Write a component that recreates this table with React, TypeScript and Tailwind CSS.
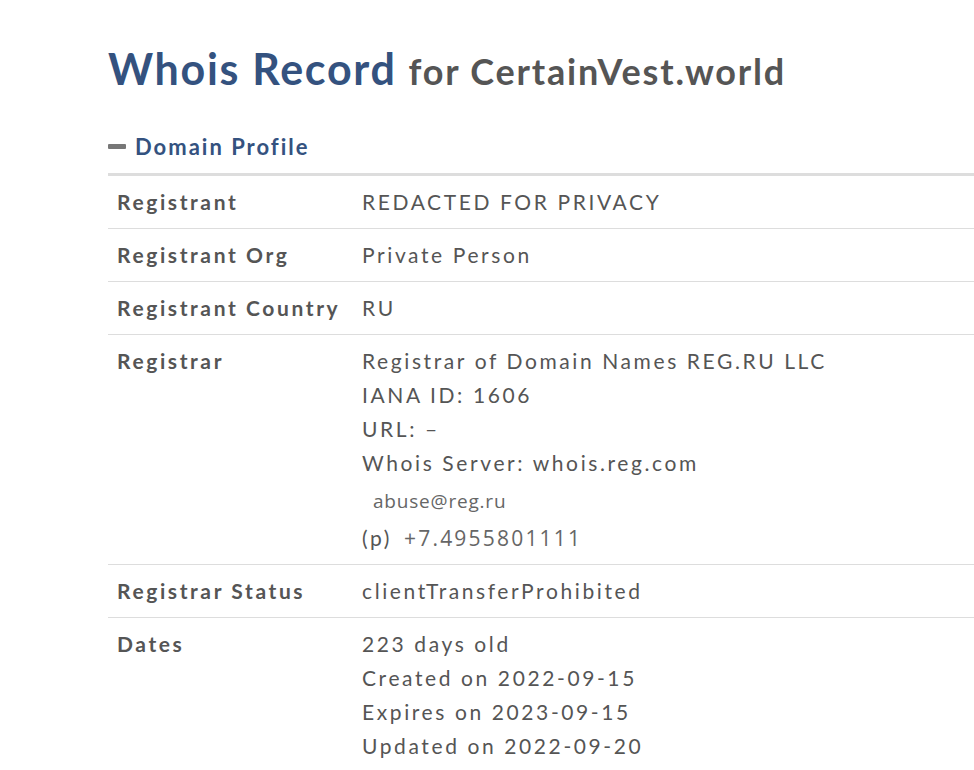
const rows: { label: string; lines: React.ReactNode[] }[] = [
  { label: 'Registrant', lines: ['REDACTED FOR PRIVACY'] },
  { label: 'Registrant Org', lines: ['Private Person'] },
  { label: 'Registrant Country', lines: ['RU'] },
  {
    label: 'Registrar',
    lines: [
      'Registrar of Domain Names REG.RU LLC',
      'IANA ID: 1606',
      'URL: –',
      'Whois Server: whois.reg.com',
      <span className="ml-[11px] block pt-[4px] font-['Open_Sans',sans-serif] text-[19px] tracking-[0.8px] text-[#666]">
        abuse@reg.ru
      </span>,
      <span className="block pt-[3px]">
        (p)
        <span className="ml-[12px] font-['Open_Sans',sans-serif] text-[21px] tracking-[2.2px] text-[#666]">
          +7.4955801111
        </span>
      </span>,
    ],
  },
  { label: 'Registrar Status', lines: ['clientTransferProhibited'] },
  {
    label: 'Dates',
    lines: [
      '223 days old',
      'Created on 2022-09-15',
      'Expires on 2023-09-15',
      'Updated on 2022-09-20',
    ],
  },
];

export default function App() {
  return (
    <div className="min-h-[770px] overflow-hidden bg-white pl-[108px] pt-[40px] font-['Lato',sans-serif] text-[#555]">
      {/* Title */}
      <h1 className="flex items-baseline whitespace-nowrap font-bold leading-[58px]">
        <span className="text-[43px] tracking-[1.7px] text-[#34527f]">Whois Record</span>
        <span className="ml-[12px] text-[36px] tracking-[1.8px] text-[#555]">for CertainVest.world</span>
      </h1>

      {/* Section header */}
      <div className="mt-[30px] flex items-center">
        <span className="mr-[9px] block h-[5px] w-[18px] rounded-[1px] bg-[#777]" />
        <span className="text-[22px] font-bold tracking-[2px] text-[#34527f]">Domain Profile</span>
      </div>

      {/* Table */}
      <div className="mt-[10px] w-[880px] border-t-[3px] border-[#ddd]">
        {rows.map((row) => (
          <div key={row.label} className="flex border-b border-[#ddd] px-[9px] py-[9px] text-[21px] leading-[34px] tracking-[2.6px]">
            <div className="w-[245px] shrink-0 font-bold">{row.label}</div>
            <div className="flex flex-col whitespace-nowrap">
              {row.lines.map((l, i) => (
                <div key={i}>{l}</div>
              ))}
            </div>
          </div>
        ))}
      </div>
    </div>
  );
}
